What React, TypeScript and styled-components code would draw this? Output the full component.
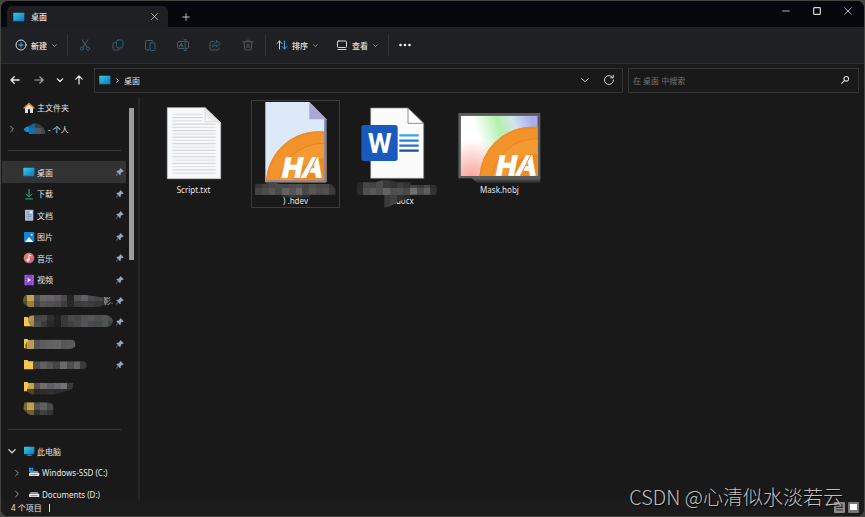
import React from 'react';
import styled, { createGlobalStyle } from 'styled-components';

const GlobalStyle = createGlobalStyle`
  * { box-sizing: border-box; }
  body {
    margin: 0;
    background: #454542;
    font-family: 'Noto Sans', 'Noto Sans CJK SC', sans-serif;
    font-size: 8px;
    line-height: 11px;
    color: #e6e6e6;
  }
  button, input { font: inherit; color: inherit; }
  button { background: none; border: 0; padding: 0; margin: 0; }
  svg { display: block; flex: none; }
`;

const Window = styled.div`
  position: relative;
  display: flex;
  flex-direction: column;
  height: 100vh;
  border: 1px solid #454542;
  border-radius: 8px;
  overflow: hidden;
  background: #191919;
`;

const TitleBar = styled.header`
  display: flex;
  align-items: flex-end;
  height: 26px;
  flex: none;
  padding-left: 6px;
  background: #04070b;
`;

const Tab = styled.div`
  display: flex;
  align-items: center;
  width: 161px;
  height: 21px;
  padding: 0 9px 0 6px;
  gap: 6px;
  border-radius: 5px 5px 0 0;
  background: #1d1f22;
`;

const TabTitle = styled.span`
  flex: 1;
  font-weight: 500;
`;

const IconButton = styled.button<{ $w?: number }>`
  display: flex;
  align-items: center;
  justify-content: center;
  width: ${(p) => p.$w ?? 20}px;
  height: 20px;
  flex: none;
`;

const TabClose = styled(IconButton)`
  width: 10px;
`;

const NewTab = styled(IconButton)`
  margin-left: 8px;
`;

const Captions = styled.div`
  display: flex;
  align-self: flex-start;
  margin-left: auto;
`;

const Toolbar = styled.div`
  display: flex;
  align-items: center;
  height: 37px;
  flex: none;
  padding-left: 13px;
  background: #1f2023;
  border-bottom: 1px solid #2d2e30;
`;

const ToolButton = styled.button<{ $w: number }>`
  display: flex;
  align-items: center;
  gap: 4px;
  width: ${(p) => p.$w}px;
  height: 24px;
  font-weight: 500;
`;

const NewButton = styled(ToolButton)`
  padding-left: 1px;
`;

const ToolDivider = styled.span`
  width: 1px;
  height: 21px;
  background: #333437;
`;

const FileActions = styled.div`
  display: flex;
  width: 197px;
  padding: 0 1px;
`;

const ActionButton = styled.button`
  display: flex;
  flex: 1;
  justify-content: center;
  align-items: center;
  height: 24px;
`;

const ViewGroup = styled.div`
  display: flex;
  width: 122px;
  padding-left: 10px;
`;

const MoreButton = styled(IconButton)`
  width: 32px;
`;

const AddressRow = styled.div`
  display: grid;
  grid-template-columns: 85px 529fr 231fr;
  column-gap: 5px;
  align-items: center;
  flex: none;
  height: 33px;
  padding: 0 5px 1px 3px;
`;

const NavButtons = styled.div`
  display: flex;
  justify-content: space-between;
  padding-left: 1px;
`;

const AddressBox = styled.div`
  display: flex;
  align-items: center;
  min-width: 0;
  height: 25px;
  padding: 0 1px 0 4px;
  border: 1px solid #333;
`;

const Crumbs = styled.nav`
  display: flex;
  align-items: center;
  gap: 4px;
  flex: 1;
`;

const SearchBox = styled.form`
  display: flex;
  align-items: center;
  min-width: 0;
  height: 25px;
  padding: 0 3px 0 4px;
  border: 1px solid #333;
`;

const SearchInput = styled.input`
  flex: 1;
  min-width: 0;
  padding: 0;
  border: 0;
  outline: 0;
  background: none;
  &::placeholder { color: #757575; opacity: 1; }
`;

const Body = styled.div`
  display: flex;
  flex: 1;
  min-height: 0;
`;

const Sidebar = styled.aside`
  display: flex;
  width: 139px;
  flex: none;
  overflow: hidden;
  border-right: 2px solid #262626;
`;

const Tree = styled.ul`
  display: grid;
  grid-auto-rows: 1fr;
  height: 408px;
  width: 125px;
  margin: 0;
  padding: 0 0 0 1px;
  list-style: none;
  flex: none;
`;

const TreeRow = styled.li<{ $active?: boolean; $indent?: number }>`
  display: flex;
  align-items: center;
  min-height: 0;
  padding-left: ${(p) => p.$indent ?? 0}px;
  background: ${(p) => (p.$active ? '#333' : 'transparent')};
`;

const TreeToggle = styled.button`
  display: flex;
  justify-content: center;
  width: 20px;
  flex: none;
`;

const TreeSpacer = styled.span`
  width: 20px;
  flex: none;
`;

const TreeLink = styled.a`
  display: flex;
  align-items: center;
  gap: 2px;
  flex: 1;
  min-width: 0;
  padding-left: 1px;
  color: inherit;
  text-decoration: none;
  white-space: nowrap;
`;

const PixelLink = styled(TreeLink)`
  gap: 0;
  color: #a8a8a8;
  overflow: hidden;
`;

const PinSlot = styled.span`
  width: 10px;
  flex: none;
`;

const Separator = styled.li`
  align-self: center;
  height: 1px;
  margin: 0 5px 0 6px;
  background: #383838;
`;

const ScrollThumb = styled.div`
  width: 5px;
  height: 152px;
  margin: 11px 0 0 3px;
  background: #9c9c9c;
`;

const Files = styled.main`
  display: flex;
  flex-wrap: wrap;
  align-content: flex-start;
  gap: 13px;
  flex: 1;
  padding: 3px 9px;
`;

const FileTile = styled.button<{ $selected?: boolean }>`
  position: relative;
  display: flex;
  flex-direction: column;
  align-items: center;
  width: 89px;
  height: 108px;
  box-shadow: ${(p) => (p.$selected ? 'inset 0 0 0 1px #3c3c3c' : 'none')};
`;

const FileName = styled.span<{ $line?: number }>`
  margin-top: ${(p) => (p.$line === 2 ? 11 : 0)}px;
`;

const Overlay = styled.svg`
  position: absolute;
  inset: 0;
`;

const StatusBar = styled.footer`
  display: flex;
  align-items: center;
  flex: none;
  height: 16px;
  padding: 0 5px 1px 10px;
  gap: 7px;
  background: #1b1b1b;
`;

const StatusMark = styled.span`
  width: 1px;
  height: 8px;
  background: #ddd;
`;

const ViewModes = styled.div`
  display: flex;
  gap: 3px;
  margin-left: auto;
`;

const ModeButton = styled.button`
  display: flex;
`;

const Watermark = styled.div`
  position: absolute;
  right: 21px;
  bottom: 4px;
  font-family: 'Noto Sans CJK SC', sans-serif;
  font-size: 20px;
  font-weight: 300;
  line-height: 30px;
  color: #c0c0c0;
  text-shadow: 1px 1px 1px #000;
  white-space: nowrap;
  pointer-events: none;
`;

/* ---------- icons ---------- */

type StrokeProps = { size?: number; color?: string; weight?: number; children: React.ReactNode };

const Stroke = ({ size = 12, color = '#d8d8d8', weight = 1, children }: StrokeProps) => (
  <svg width={size} height={size} viewBox="0 0 12 12" fill="none" stroke={color} strokeWidth={weight} strokeLinecap="round" strokeLinejoin="round">
    {children}
  </svg>
);

const ChevronDown = ({ size = 12, color = '#d8d8d8', weight = 1 }) => (
  <Stroke size={size} color={color} weight={weight}><path d="M2.8 4.6 6 7.8l3.2-3.2" /></Stroke>
);
const ChevronRight = ({ color = '#999' }) => (
  <Stroke color={color}><path d="M4.6 3.2 7.4 6 4.6 8.8" /></Stroke>
);
const SmallDown = () => <ChevronDown size={7} color="#a0a0a0" weight={1.4} />;

const DesktopIcon = () => (
  <svg width="12" height="10" viewBox="0 0 36 30">
    <defs>
      <linearGradient id="desk" x1="0" y1="0" x2="1" y2="1">
        <stop offset="0" stopColor="#35d0e4" />
        <stop offset="1" stopColor="#0f72b8" />
      </linearGradient>
    </defs>
    <rect x="1" y="2" width="33" height="26" rx="2" fill="url(#desk)" />
    <path d="M2 25h31v2H2z" fill="#1185c2" />
  </svg>
);

const HomeIcon = () => (
  <svg width="12" height="12" viewBox="0 0 36 36">
    <path d="M6 15 18 5l12 10v18h-9V22h-6v11H6z" fill="#dcdcdc" />
    <path d="M3 18 18 4l15 14" fill="none" stroke="#e8792b" strokeWidth="4" strokeLinecap="round" />
  </svg>
);

const DownloadIcon = () => (
  <Stroke color="#24b58b"><path d="M6 1.5v7M3.2 6 6 8.8 8.8 6M2.7 10.9h6.8" /></Stroke>
);

const DocumentIcon = () => (
  <svg width="12" height="12" viewBox="0 0 36 36">
    <rect x="6" y="2" width="25" height="33" rx="2" fill="#a9bdd6" />
    <path d="M11 10h9M11 16h15M11 22h15M11 28h10" stroke="#6d84a6" strokeWidth="2" />
    <rect x="20" y="7" width="7" height="6" fill="#e8f0fa" />
  </svg>
);

const PictureIcon = () => (
  <svg width="12" height="12" viewBox="0 0 36 36">
    <rect x="3" y="3" width="31" height="31" rx="3" fill="#1583d3" />
    <path d="M6 33 18 18l13 15z" fill="#f2f8ff" />
    <circle cx="26" cy="11" r="3" fill="#e4f3ff" />
  </svg>
);

const MusicIcon = () => (
  <svg width="12" height="12" viewBox="0 0 36 36">
    <defs>
      <linearGradient id="music" x1="0" y1="0" x2="1" y2="1">
        <stop offset="0" stopColor="#ee8a5c" />
        <stop offset="1" stopColor="#c6588d" />
      </linearGradient>
    </defs>
    <circle cx="18" cy="18" r="16" fill="url(#music)" />
    <path d="M18 24V8l7 4" fill="none" stroke="#fff" strokeWidth="3" />
    <circle cx="15" cy="24" r="4.5" fill="#fff" />
  </svg>
);

const VideoIcon = () => (
  <svg width="12" height="12" viewBox="0 0 36 36">
    <rect x="4" y="2" width="29" height="32" rx="3" fill="#8b45d4" />
    <path d="M8 4v30M29 4v30" stroke="#c59af0" strokeWidth="2.4" strokeDasharray="3 4" />
    <path d="m14 11 10 7-10 7z" fill="#fff" />
  </svg>
);

const ComputerIcon = () => (
  <svg width="12" height="12" viewBox="0 0 36 36">
    <rect x="3" y="5" width="31" height="23" rx="2" fill="url(#desk)" />
    <path d="M14 28h9v3h4v2H10v-2h4z" fill="#2c7fae" />
  </svg>
);

const DriveIcon = ({ system = false }: { system?: boolean }) => (
  <svg width="12" height="12" viewBox="0 0 36 36">
    <path d="M8 12h21l5 8H3z" fill="#8e9193" />
    <rect x="3" y="18" width="31" height="9" rx="2" fill="#e4e6e7" />
    <path d="M8 23h20" stroke="#555" strokeWidth="2" />
    {system && <path d="M3 2h6v6H3zM10 2h6v6h-6zM3 9h6v6H3zM10 9h6v6h-6z" fill="#1f9be6" />}
  </svg>
);

const PinIcon = () => (
  <svg width="8" height="8" viewBox="0 0 24 24">
    <path d="m14 1 9 9-3 2-2-1-4 5v4l-2 2-5-6-6 7-1-1 6-7-5-5 2-2h4l5-4-1-2z" fill="#9aa6b0" />
  </svg>
);

/* ---------- pixelated labels ---------- */

type Strip = { x: number; y: number; h: number; fills: string[] };

const Cells = ({ strips }: { strips: Strip[] }) => (
  <g shapeRendering="crispEdges">
    {strips.map((s, i) =>
      s.fills.map((f, j) => <rect key={`${i}-${j}`} x={s.x + j * 20.3} y={s.y} width="21" height={s.h + 1} fill={f} />)
    )}
  </g>
);

const Folder = ({ y = 12 }: { y?: number }) => (
  <path d={`M3 ${y}h10l4 4h15v24H3z`} fill="#f4c64f" />
);

type PixelProps = { id: string; shape: string; strips: Strip[]; folder?: boolean; width?: number };

const Pixelated = ({ id, shape, strips, folder, width = 276 }: PixelProps) => (
  <svg width={Math.round(width / 3)} height="18" viewBox={`0 0 ${Math.round(width / 3) * 3} 54`}>
    <clipPath id={id}><path d={shape} /></clipPath>
    {folder && <Folder />}
    <g clipPath={`url(#${id})`}><Cells strips={strips} /></g>
  </svg>
);

const AccountPixels = () => (
  <svg width="23" height="14" viewBox="0 0 69 42">
    <clipPath id="acct"><path d="M18 12Q36-3 54 10Q68 20 67 36H18z" /></clipPath>
    <path d="M2 22Q10 10 22 14V31Q4 32 2 22z" fill="#1389dc" />
    <g clipPath="url(#acct)" shapeRendering="crispEdges">
      <rect x="15" y="0" width="21" height="19" fill="#255e83" />
      <rect x="15" y="18" width="21" height="20" fill="#176dab" />
      <rect x="35" y="0" width="40" height="19" fill="#343c44" />
      <rect x="35" y="18" width="21" height="20" fill="#52565e" />
      <rect x="55" y="18" width="20" height="20" fill="#45464a" />
    </g>
  </svg>
);

const pixelRows: (PixelProps & { pinned?: boolean; tail?: string })[] = [
  {
    id: 'p1', pinned: true, width: 240, tail: '影.',
    shape: 'M8 9H190Q222 14 250 18Q262 25 244 34Q238 44 222 46H20Q0 40 0 25Q0 14 8 9z',
    strips: [
      { x: -9, y: 6, h: 22, fills: ['#6d5b2c', '#c0a354', '#4f4e4d', '#6a6769', '#646264', '#5d5b5d', '#4b494a', '#252525', '#535155', '#625e65', '#4c4a4c', '#454545', '#444'] },
      { x: -9, y: 28, h: 20, fills: ['#5c4d25', '#97813f', '#434243', '#555354', '#504e50', '#4d4b4d', '#3e3d3e', '#292929', '#3b3a3b', '#403f40', '#3b3b3b', '#373737', '#333'] },
    ],
  },
  {
    id: 'p2', pinned: true, folder: true, width: 270,
    shape: 'M22 8Q36 5 80 6H250Q272 12 269 28Q266 40 250 42H34Q18 40 15 24Q15 12 22 8z',
    strips: [
      { x: -8, y: 3, h: 22, fills: ['#8a7336', '#b19448', '#444445', '#484849', '#303030', '#202020', '#393939', '#4a4a4b', '#454647', '#505052', '#555557', '#4c4e50', '#515354', '#494b4c'] },
      { x: -8, y: 25, h: 20, fills: ['#8a7336', '#a58842', '#4d4d4e', '#393939', '#272727', '#202020', '#383838', '#3f4041', '#464748', '#515253', '#484a4b', '#474949', '#505353', '#414343'] },
    ],
  },
  {
    id: 'p3', pinned: true, folder: true, width: 166,
    shape: 'M15 18Q22 12 40 14H150Q159 20 157 32Q153 41 140 42H14Q4 40 7 28z',
    strips: [{ x: -9, y: 8, h: 36, fills: ['#7c6730', '#ba9c4b', '#535252', '#5e5d5c', '#626161', '#646363', '#565656', '#59595a', '#656463'] }],
  },
  {
    id: 'p4', pinned: true, folder: true, width: 200,
    shape: 'M30 16H182Q193 20 190 33Q187 39 180 39H30z',
    strips: [{ x: 30, y: 12, h: 30, fills: ['#4f4d49', '#625f5d', '#555353', '#464545', '#6a6969', '#4e4d4d', '#626161', '#3c3c3c'] }],
  },
  {
    id: 'p5', folder: true, width: 180,
    shape: 'M20 14H150Q154 25 146 34Q120 42 94 50H30Q15 47 11 37z',
    strips: [
      { x: -9, y: 10, h: 24, fills: ['#8f7739', '#c2a34e', '#57534a', '#6d6b6b', '#605f61', '#69696e', '#71717a', '#3b3836'] },
      { x: -9, y: 34, h: 20, fills: ['#51451f', '#51451f', '#292724', '#2e2d2c', '#303031', '#2b2b2c', '#303034', '#282828'] },
    ],
  },
  {
    id: 'p6', width: 180,
    shape: 'M4 10H70Q94 12 91 25V49H26Q8 43 1 30z',
    strips: [
      { x: -9, y: 8, h: 24, fills: ['#7b6732', '#bea150', '#555248', '#5f5e60', '#4b4a4b', '#303030'] },
      { x: -9, y: 32, h: 20, fills: ['#504320', '#70602f', '#30302d', '#424142', '#343434', '#292929'] },
    ],
  },
];

/* ---------- file artwork ---------- */

const ScriptArt = () => (
  <svg width="89" height="84" viewBox="-3 15 267 252">
    <defs>
      <linearGradient id="fold" x1="0" y1="1" x2="1" y2="0">
        <stop offset="0" stopColor="#fff" /><stop offset="1" stopColor="#c8c8c8" />
      </linearGradient>
    </defs>
    <path d="M52 38H165L212 83V251H52z" fill="#f7f8f9" stroke="#c9c9c9" strokeWidth="2" />
    {Array.from({ length: 19 }, (_, i) => (
      <path key={i} d={`M67 ${58 + i * 9.8}H${i < 3 ? 158 : 197}`} stroke={i % 2 ? '#c2c6c8' : '#d4d7d9'} strokeWidth="2.4" />
    ))}
    <path d="M165 38V81Q188 77 212 83z" fill="url(#fold)" stroke="#cfcfcf" strokeWidth="2" />
  </svg>
);

const OrangeDisc = ({ cx, cy, r }: { cx: number; cy: number; r: number }) => (
  <>
    <circle cx={cx} cy={cy} r={r} fill="#f2932c" />
    <circle cx={cx} cy={cy} r={r - 3} fill="none" stroke="#f08c26" strokeWidth="6" />
    <circle cx={cx + 12} cy={cy + 12} r={r - 24} fill="#f39a35" stroke="#ea831c" strokeWidth="3" />
    <circle cx={cx + 20} cy={cy + 30} r={r - 50} fill="#f08a20" stroke="#ef9233" strokeWidth="2" />
  </>
);

const Brand = ({ x, y }: { x: number; y: number }) => (
  <>
    <text x={x} y={y} fontFamily="Liberation Sans, sans-serif" fontSize="84" fontWeight="700" fontStyle="italic" fill="#fff" stroke="#fff" strokeWidth="5">HA</text>
    <path d={`M${x + 72} ${y + 2}L${x + 104} ${y - 62}`} stroke="#ee8920" strokeWidth="3" />
  </>
);

const HdevArt = () => (
  <svg width="89" height="84" viewBox="18 15 267 252">
    <clipPath id="hdevPage"><path d="M61 21H193L244 73V262H61z" /></clipPath>
    <path d="M61 21H193L244 73V262H61z" fill="#dde8f9" />
    <g clipPath="url(#hdevPage)">
      <OrangeDisc cx={222} cy={268} r={159} />
      <path d="M61 259H241V70" fill="none" stroke="#7889b5" strokeWidth="7" />
    </g>
    <path d="M193 21V73H244z" fill="#a9a8d4" />
    <Brand x={112} y={247} />
  </svg>
);

const WordArt = () => (
  <svg width="89" height="84" viewBox="24 15 267 252">
    <path d="M77 39H189L236 85V250H77z" fill="#fbfbfb" stroke="#888" strokeWidth="2" />
    <path d="M189 39V85H236z" fill="#fff" stroke="#777" strokeWidth="2.5" />
    <path d="M163 121H221" stroke="#35a5ea" strokeWidth="7" />
    <path d="M163 137H221" stroke="#2b7fd0" strokeWidth="7" />
    <path d="M163 152H221" stroke="#2b6fc9" strokeWidth="7" />
    <path d="M163 167H221" stroke="#204a95" strokeWidth="7" />
    <rect x="49" y="90" width="109" height="108" rx="8" fill="#185abd" />
    <text x="104" y="173" textAnchor="middle" fontFamily="Roboto, sans-serif" fontSize="82" fontWeight="700" fill="#fff">W</text>
  </svg>
);

const MaskArt = () => (
  <svg width="89" height="84" viewBox="30 15 267 252">
    <defs>
      <linearGradient id="rainbow" x1="0" y1="0.25" x2="1" y2="0">
        <stop offset="0.2" stopColor="#fff" />
        <stop offset="0.48" stopColor="#b5f0ae" />
        <stop offset="0.68" stopColor="#d3e6ec" />
        <stop offset="0.9" stopColor="#a9aef0" />
      </linearGradient>
      <radialGradient id="blush" cx="0.15" cy="1" r="0.6">
        <stop offset="0" stopColor="#f9a9a0" /><stop offset="1" stopColor="#f9a9a0" stopOpacity="0" />
      </radialGradient>
      <linearGradient id="drop" x1="0" y1="0" x2="0" y2="1">
        <stop offset="0" stopColor="#6a6a6a" /><stop offset="1" stopColor="#6a6a6a" stopOpacity="0" />
      </linearGradient>
      <clipPath id="maskFrame"><rect x="47" y="62" width="231" height="181" /></clipPath>
    </defs>
    <path d="M80 248H286V266H110Q90 264 80 248z" fill="url(#drop)" />
    <rect x="40" y="54" width="246" height="196" fill="#5b5b5b" />
    <g clipPath="url(#maskFrame)">
      <rect x="47" y="62" width="231" height="181" fill="url(#rainbow)" />
      <rect x="47" y="62" width="231" height="181" fill="url(#blush)" />
      <OrangeDisc cx={262} cy={254} r={159} />
    </g>
    <Brand x={154} y={240} />
  </svg>
);

const HdevCover = () => (
  <Overlay width="89" height="108" viewBox="18 15 267 324" aria-hidden="true">
    <clipPath id="hc"><path d="M30 266H60Q82 260 104 267H255Q264 269 272 284V299H196V308H136Q110 309 108 300H30z" /></clipPath>
    <g clipPath="url(#hc)">
      <Cells strips={[
        { x: 30, y: 260, h: 20, fills: ['#363636', '#424242', '#454749', '#4a4d50', '#454647', '#4c4c4c', '#505050', '#454545', '#515151', '#494949', '#4a4a4a', '#363636'] },
        { x: 30, y: 280, h: 20, fills: ['#434343', '#4c4c4c', '#555', '#484848', '#626262', '#555', '#666', '#494949', '#575757', '#4e4e4e', '#515151', '#3c3c3c'] },
        { x: 30, y: 300, h: 10, fills: ['#222', '#222', '#222', '#262626', '#2e2e2e', '#3a3a3a', '#353535', '#2e2e2e', '#2a2a2a'] },
      ]} />
    </g>
  </Overlay>
);

const WordCover = () => (
  <Overlay width="89" height="108" viewBox="24 15 267 324" aria-hidden="true">
    <clipPath id="wc"><path d="M40 262H92Q124 248 156 262H196V270H272Q280 283 272 299H196V310Q160 316 140 332L118 338V300H40Q28 282 40 262z" /></clipPath>
    <g clipPath="url(#wc)">
      <Cells strips={[
        { x: 33, y: 250, h: 29, fills: ['#292929', '#464646', '#414141', '#4c4c4c', '#393939', '#333', '#3d3d3d', '#343434', '#444', '#3a3a3a', '#494949', '#2f2f2f'] },
        { x: 33, y: 279, h: 20, fills: ['#2b2b2b', '#505050', '#585858', '#4f4f4f', '#636363', '#505050', '#525252', '#494949', '#6e7072', '#4e4e4e', '#5d5e5f', '#353535'] },
        { x: 33, y: 299, h: 40, fills: ['#222', '#222', '#222', '#222', '#3b3b3b', '#414141', '#303030', '#2b2b2b', '#252525'] },
      ]} />
    </g>
  </Overlay>
);

/* ---------- page ---------- */

type TreeEntry = { label: string; icon: React.ReactNode; pinned?: boolean; active?: boolean; indent?: number; toggle?: 'open' | 'closed' };

const places: TreeEntry[] = [
  { label: '桌面', icon: <DesktopIcon />, pinned: true, active: true },
  { label: '下载', icon: <DownloadIcon />, pinned: true },
  { label: '文档', icon: <DocumentIcon />, pinned: true },
  { label: '图片', icon: <PictureIcon />, pinned: true },
  { label: '音乐', icon: <MusicIcon />, pinned: true },
  { label: '视频', icon: <VideoIcon />, pinned: true },
];

const drives: TreeEntry[] = [
  { label: '此电脑', icon: <ComputerIcon />, toggle: 'open' },
  { label: 'Windows-SSD (C:)', icon: <DriveIcon system />, toggle: 'closed', indent: 5 },
  { label: 'Documents (D:)', icon: <DriveIcon />, toggle: 'closed', indent: 5 },
];

const TreeItem = ({ label, icon, pinned, active, indent, toggle }: TreeEntry) => (
  <TreeRow $active={active} $indent={indent}>
    {toggle ? (
      <TreeToggle aria-label={label} aria-expanded={toggle === 'open'}>
        {toggle === 'open' ? <ChevronDown weight={1.3} /> : <ChevronRight />}
      </TreeToggle>
    ) : <TreeSpacer />}
    <TreeLink href="#">{icon}{label}</TreeLink>
    {pinned && <PinSlot><PinIcon /></PinSlot>}
  </TreeRow>
);

const dim = '#55595c';
const blue = '#27607a';

const actions = [
  { name: '剪切', art: <><path d="M3.2.9 8 8.2M8.8.9 4 8.2" /><g stroke={blue}><circle cx="3" cy="9.5" r="1.6" /><circle cx="9" cy="9.5" r="1.6" /></g></> },
  { name: '复制', art: <><path d="M4 3.5H2.5A1.5 1.5 0 0 0 1 5v4.5A1.5 1.5 0 0 0 2.5 11H6a1.5 1.5 0 0 0 1.5-1.5" /><rect x="4.5" y="1" width="6.5" height="7.8" rx="1.5" stroke={blue} /></> },
  { name: '粘贴', art: <><path d="M5 11H2.5a1 1 0 0 1-1-1V2.5a1 1 0 0 1 1-1H8a1 1 0 0 1 1 1M3.8 1.5h3" /><rect x="6" y="4" width="5" height="7.5" rx="1" stroke={blue} /></> },
  { name: '重命名', art: <><path d="M7 2.5H2A1.5 1.5 0 0 0 .6 4v4A1.5 1.5 0 0 0 2 9.5h5M9.5 2.5h.5A1.5 1.5 0 0 1 11.5 4v4A1.5 1.5 0 0 1 10 9.5h-.5M2.5 7.8 4.3 4l1.7 3.8M3 6.7h2.5" /><path d="M8.2.7v10.6M7 .7h2.4M7 11.3h2.4" stroke={blue} /></> },
  { name: '共享', art: <><path d="M4.5 2.5h-2A1.5 1.5 0 0 0 1 4v5.5A1.5 1.5 0 0 0 2.5 11h6A1.5 1.5 0 0 0 10 9.5V8.8" /><path d="M7.5 1.5 11.2 4.7 7.5 8V6.2C5.5 6.2 4.2 6.9 3.3 8.2c.2-2.7 1.7-4.5 4.2-4.8z" stroke={blue} /></> },
  { name: '删除', art: <path d="M1 2.8h10M4.5 2.5a1.5 1.5 0 0 1 3 0M2 3l.8 7.2a1 1 0 0 0 1 .8h4.4a1 1 0 0 0 1-.8L10 3M5 5.3v3.4M7 5.3v3.4" /> },
];

export default function App() {
  return (
    <>
      <GlobalStyle />
      <Window>
        <TitleBar>
          <Tab>
            <DesktopIcon />
            <TabTitle>桌面</TabTitle>
            <TabClose aria-label="关闭标签页"><Stroke size={9}><path d="M2 2l8 8M10 2l-8 8" /></Stroke></TabClose>
          </Tab>
          <NewTab aria-label="新标签页"><Stroke size={10}><path d="M6 2v8M2 6h8" /></Stroke></NewTab>
          <Captions>
            <IconButton $w={31} aria-label="最小化"><Stroke size={10}><path d="M2 6h8" /></Stroke></IconButton>
            <IconButton $w={31} aria-label="最大化"><Stroke size={10} weight={1.4}><rect x="2" y="2" width="8" height="8" rx="1" /></Stroke></IconButton>
            <IconButton $w={32} aria-label="关闭"><Stroke size={10}><path d="M2 2l8 8M10 2l-8 8" /></Stroke></IconButton>
          </Captions>
        </TitleBar>

        <Toolbar>
          <NewButton $w={53}>
            <Stroke><circle cx="6" cy="6" r="5" /><path d="M6 3.8v4.4M3.8 6h4.4" stroke="#45b5e8" /></Stroke>
            新建<SmallDown />
          </NewButton>
          <ToolDivider />
          <FileActions>
            {actions.map((a) => (
              <ActionButton key={a.name} aria-label={a.name} disabled><Stroke color={dim}>{a.art}</Stroke></ActionButton>
            ))}
          </FileActions>
          <ToolDivider />
          <ViewGroup>
            <ToolButton $w={60}>
              <Stroke><path d="M3.5 10V2M1 4.5 3.5 2 6 4.5" /><path d="M8.5 2v8M6 7.5 8.5 10 11 7.5" stroke="#3fa9dc" /></Stroke>
              排序<SmallDown />
            </ToolButton>
            <ToolButton $w={50}>
              <Stroke><rect x="1.5" y="2" width="9" height="6.5" rx="1" /><path d="M2 10.5h8" /></Stroke>
              查看<SmallDown />
            </ToolButton>
          </ViewGroup>
          <ToolDivider />
          <MoreButton aria-label="更多">
            <svg width="12" height="4" viewBox="0 0 12 4" fill="#eee"><circle cx="1.5" cy="2" r="1.3" /><circle cx="6" cy="2" r="1.3" /><circle cx="10.5" cy="2" r="1.3" /></svg>
          </MoreButton>
        </Toolbar>

        <AddressRow>
          <NavButtons>
            <IconButton aria-label="后退"><Stroke color="#eee" weight={1.3}><path d="M10.2 6H2M5.2 2.8 2 6l3.2 3.2" /></Stroke></IconButton>
            <IconButton $w={26} aria-label="前进"><Stroke color="#aaa" weight={1.2}><path d="M1.8 6H10M6.8 2.8 10 6 6.8 9.2" /></Stroke></IconButton>
            <IconButton $w={16} aria-label="最近位置"><ChevronDown size={10} color="#eee" weight={1.5} /></IconButton>
            <IconButton aria-label="向上"><Stroke color="#eee" weight={1.2}><path d="M6 10V2M2.8 5.2 6 2l3.2 3.2" /></Stroke></IconButton>
          </NavButtons>
          <AddressBox>
            <Crumbs aria-label="路径">
              <DesktopIcon />
              <Stroke size={5} weight={2.4} color="#eee"><path d="M4 2l4 4-4 4" /></Stroke>
              <button>桌面</button>
            </Crumbs>
            <IconButton $w={24} aria-label="展开路径"><ChevronDown /></IconButton>
            <IconButton $w={24} aria-label="刷新"><Stroke><path d="M9.8 3.6A4.5 4.5 0 1 0 10.5 6M10.2 1.2v2.6H7.6" /></Stroke></IconButton>
          </AddressBox>
          <SearchBox onSubmit={(e) => e.preventDefault()}>
            <SearchInput aria-label="搜索" placeholder="在 桌面 中搜索" />
            <IconButton aria-label="搜索"><Stroke size={10} weight={1.3}><circle cx="7.5" cy="4.5" r="2.8" /><path d="M5.4 6.6 2 10" /></Stroke></IconButton>
          </SearchBox>
        </AddressRow>

        <Body>
          <Sidebar>
            <Tree>
              <TreeItem label="主文件夹" icon={<HomeIcon />} />
              <TreeRow>
                <TreeToggle aria-label="个人" aria-expanded={false}><ChevronRight /></TreeToggle>
                <TreeLink href="#"><AccountPixels />- 个人</TreeLink>
              </TreeRow>
              <Separator />
              {places.map((p) => <TreeItem key={p.label} {...p} />)}
              {pixelRows.map(({ pinned, tail, ...row }) => (
                <TreeRow key={row.id}>
                  <TreeSpacer />
                  <PixelLink href="#"><Pixelated {...row} />{tail}</PixelLink>
                  {pinned && <PinSlot><PinIcon /></PinSlot>}
                </TreeRow>
              ))}
              <Separator />
              {drives.map((d) => <TreeItem key={d.label} {...d} />)}
            </Tree>
            <ScrollThumb />
          </Sidebar>
          <Files>
            <FileTile><ScriptArt /><FileName>Script.txt</FileName></FileTile>
            <FileTile $selected><HdevArt /><FileName $line={2}>) .hdev</FileName><HdevCover /></FileTile>
            <FileTile><WordArt /><FileName $line={2}>&nbsp; &nbsp; &nbsp; .docx</FileName><WordCover /></FileTile>
            <FileTile><MaskArt /><FileName>Mask.hobj</FileName></FileTile>
          </Files>
        </Body>

        <StatusBar>
          <span>4 个项目</span>
          <StatusMark />
          <ViewModes>
            <ModeButton aria-label="详细信息">
              <svg width="11" height="11" viewBox="0 0 11 11"><rect width="11" height="11" rx="1" fill="#8b8b8b" /><path d="M2 3h7M2 5.5h7M2 8h7" stroke="#333" /></svg>
            </ModeButton>
            <ModeButton aria-label="大图标">
              <svg width="11" height="11" viewBox="0 0 11 11"><rect width="11" height="11" rx="1" fill="#777" /><rect x="2" y="2" width="7" height="6" fill="#fff" /></svg>
            </ModeButton>
          </ViewModes>
        </StatusBar>
        <Watermark>CSDN @心清似水淡若云</Watermark>
      </Window>
    </>
  );
}
